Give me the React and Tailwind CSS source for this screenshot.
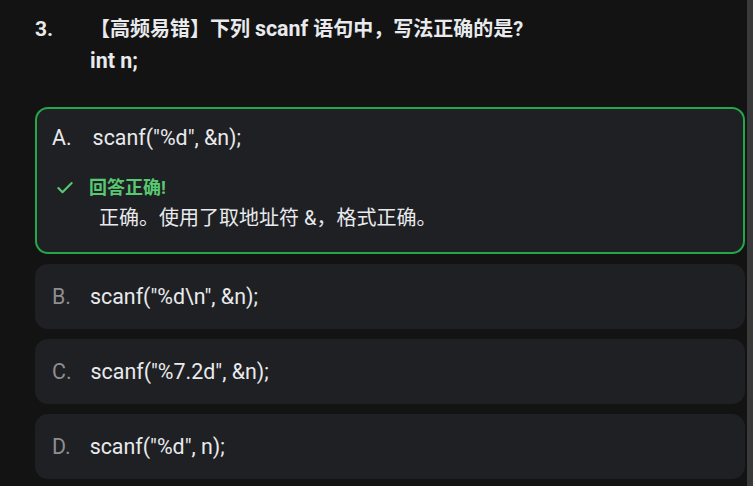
import React from 'react';
import { Check } from 'lucide-react';

const options = [
  { key: 'B', text: 'scanf("%d\\n", &n);' },
  { key: 'C', text: 'scanf("%7.2d", &n);' },
  { key: 'D', text: 'scanf("%d", n);' },
];

export default function App() {
  return (
    <div className="flex h-[486px] w-full overflow-hidden bg-[#131313] font-['Roboto','Noto_Sans_CJK_SC',sans-serif]">
      <div className="flex-1 pl-[35px] pr-[2px] pt-[13px]">
        {/* Question */}
        <div className="flex text-[20px] font-bold leading-[32px] text-[#e8eaed]">
          <span className="w-[55px] shrink-0 text-[21px]">3.</span>
          <div>
            <div>
              【高频易错】下列 <span className="text-[21.4px]">scanf</span> 语句中，写法正确的是?
            </div>
            <div className="text-[21.4px]">int n;</div>
          </div>
        </div>

        {/* Answered option */}
        <div className="mt-[30px] flex flex-col rounded-[13px] border-2 border-[#22a84a] bg-[#1f2023] pb-[20px] pl-[15px] pt-[15px]">
          <div className="flex h-[28px] items-center text-[21.4px] leading-[28px] text-[#e8eaed]">
            <span className="mr-[21px]">A.</span>
            <span>scanf("%d", &amp;n);</span>
          </div>
          <div className="mt-[24px] flex h-[24px] items-center">
            <Check className="ml-[3px] h-5 w-5 text-[#58c872]" strokeWidth={2.5} />
            <span className="ml-[14px] text-[18px] font-bold leading-[24px] text-[#58c872]">回答正确!</span>
          </div>
          <div className="mt-[4px] pl-[47px] text-[20px] leading-[28px] text-[#e8eaed]">
            正确。使用了取地址符 &amp;，格式正确。
          </div>
        </div>

        {/* Other options */}
        {options.map((o) => (
          <div
            key={o.key}
            className="mt-[10px] flex h-[65px] items-center rounded-[13px] bg-[#1f2023] pl-[17px] text-[21.4px] leading-[28px]"
          >
            <span className="mr-[19px] text-[#8e8e8e]">{o.key}.</span>
            <span className="text-[#e8eaed]">{o.text}</span>
          </div>
        ))}
      </div>
      <div className="w-[6px] shrink-0 bg-[#3a3a3a]" />
    </div>
  );
}
